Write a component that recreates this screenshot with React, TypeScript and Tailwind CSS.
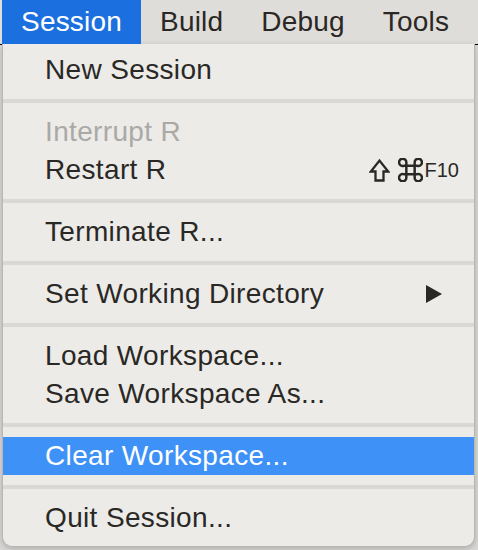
import React from "react";

type Item =
  | { kind: "item"; label: string; disabled?: boolean; active?: boolean; shortcut?: boolean; submenu?: boolean }
  | { kind: "sep" };

const MENUS = ["Session", "Build", "Debug", "Tools"];

const ITEMS: Item[] = [
  { kind: "item", label: "New Session" },
  { kind: "sep" },
  { kind: "item", label: "Interrupt R", disabled: true },
  { kind: "item", label: "Restart R", shortcut: true },
  { kind: "sep" },
  { kind: "item", label: "Terminate R..." },
  { kind: "sep" },
  { kind: "item", label: "Set Working Directory", submenu: true },
  { kind: "sep" },
  { kind: "item", label: "Load Workspace..." },
  { kind: "item", label: "Save Workspace As..." },
  { kind: "sep" },
  { kind: "item", label: "Clear Workspace...", active: true },
  { kind: "sep" },
  { kind: "item", label: "Quit Session..." },
];

function ShiftIcon() {
  return (
    <svg width="21" height="24" viewBox="0 0 21 24" fill="none" stroke="#2a2825" strokeWidth="2.3" strokeLinejoin="miter">
      <path d="M6.5 22.5V13.5H1.8L10.5 2.5L19.2 13.5H14.5V22.5Z" />
    </svg>
  );
}

function CmdIcon() {
  return (
    <svg width="25" height="24" viewBox="0 0 24 23" fill="none" stroke="#2a2825" strokeWidth="2.4">
      <path d="M8 7.5H16V15.5H8Z" />
      <path d="M8 7.5H5.5A3.5 3.5 0 1 1 8 4.2V7.5Z" />
      <path d="M16 7.5V4.2A3.5 3.5 0 1 1 18.5 7.5Z" />
      <path d="M16 15.5H18.5A3.5 3.5 0 1 1 16 18.8Z" />
      <path d="M8 15.5V18.8A3.5 3.5 0 1 1 5.5 15.5Z" />
    </svg>
  );
}

export default function App() {
  return (
    <div
      className="w-[478px] h-[550px] overflow-hidden bg-[#d9d8d6]"
      style={{ fontFamily: '"Liberation Sans", Arial, sans-serif' }}
    >
      {/* menu bar */}
      <div className="h-[44px] bg-[#dfddd9] flex items-stretch pl-[2px]">
        {MENUS.map((m, i) => (
          <div
            key={m}
            className={`flex items-center px-[19px] text-[28px] leading-none tracking-[0.2px] ${
              i === 0 ? "bg-[#1b6fde] text-white" : "text-[#2a2724]"
            }`}
          >
            {m}
          </div>
        ))}
      </div>

      <div className="border-t border-black">
        <div className="-mt-px ml-[2px] w-[473px] bg-[#ecebe8] border-x border-b border-[#b9b7b3] rounded-b-[10px] pt-[7px] pb-[9px] shadow-[0_2px_6px_rgba(0,0,0,0.2)]">
          {ITEMS.map((it, i) =>
            it.kind === "sep" ? (
              <div key={i} className="py-[10px]">
                <div className="h-[4px] bg-[#d9d8d5]" />
              </div>
            ) : (
              <div
                key={i}
                className={`h-[38px] flex items-center pl-[42px] pr-[15px] text-[28px] leading-none tracking-[0.35px] ${
                  it.active ? "bg-[#3e91f6] text-white" : it.disabled ? "text-[#aaa9a6]" : "text-[#2a2825]"
                }`}
              >
                <span className="flex-1">{it.label}</span>
                {it.shortcut && (
                  <span className="flex items-center gap-[8px] text-[#2a2825]">
                    <ShiftIcon />
                    <span className="flex items-center">
                      <CmdIcon />
                      <span className="text-[20px] tracking-normal ml-[2px]">F10</span>
                    </span>
                  </span>
                )}
                {it.submenu && (
                  <svg width="18" height="18" viewBox="0 0 18 18" className="mr-[16px]">
                    <polygon points="1,0 17,9 1,18" fill="#2a2825" />
                  </svg>
                )}
              </div>
            )
          )}
        </div>
      </div>
    </div>
  );
}
